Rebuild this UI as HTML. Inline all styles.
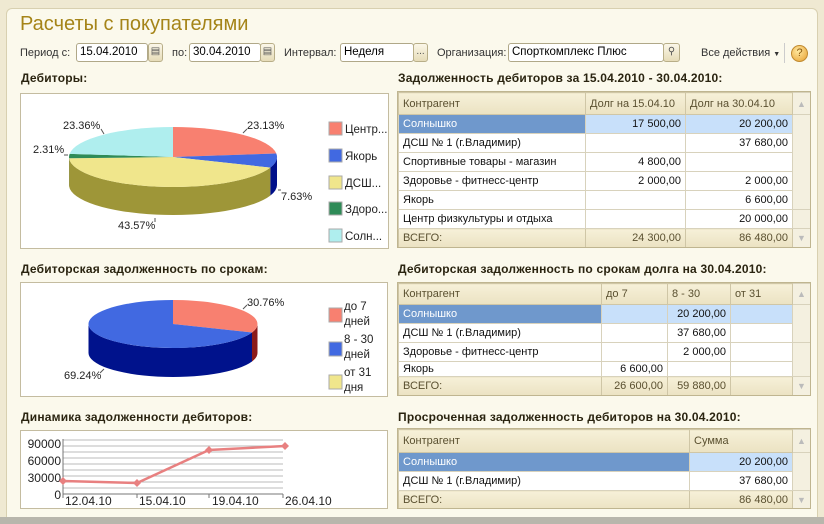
<!DOCTYPE html>
<html><head><meta charset="utf-8"><style>
*{box-sizing:border-box;margin:0;padding:0}
body{width:824px;height:524px;overflow:hidden;background:#efe9d2;font-family:"Liberation Sans","DejaVu Sans",sans-serif;font-size:11px;color:#222;position:relative}
.win{position:absolute;left:6px;top:8px;width:812px;height:510px;background:#fbf9ec;border:1px solid #d8d0b0;border-radius:6px 6px 0 0}
.bot{position:absolute;left:0;top:517px;width:824px;height:7px;background:#b8b6ac}
.a{position:absolute;white-space:nowrap}
.title{left:20px;top:13px;font-size:20px;color:#a58418}
.lbl{font-size:11px;color:#333;top:47px}
.inp{position:absolute;top:43px;height:19px;background:#fff;border:1px solid #b0a888;border-radius:3px;font-size:11.5px;padding:2px 3px;color:#000}
.btn{position:absolute;top:43px;height:19px;width:15px;border:1px solid #b8ae88;border-radius:3px;background:linear-gradient(#fbf7e8,#e6dcb8);font-size:10px;text-align:center;line-height:16px;color:#555}
.h{font-weight:bold;font-size:12px;color:#2a2410;letter-spacing:0.2px}
.box{position:absolute;background:#fff;border:1px solid #c4bca0}
table{position:absolute;border-collapse:collapse;font-size:11px;table-layout:fixed;background:#fff}
td{border:1px solid #d8d2bc;height:19px;padding:0 4px;white-space:nowrap;overflow:hidden;color:#111}
td.r{text-align:right}
tr.hd td,tr.tot td{background:linear-gradient(#f6f0d8,#ebe2c2);color:#5a5030;border-color:#cfc6a6}
tr.sel td{background:#c8e0fa}
tr.sel td.f{background:#6f98cc;color:#fff}
td.sb,tr.sel td.sb,tr.hd td.sb,tr.tot td.sb{background:#f4f0e0;border-color:#d8d2bc;text-align:center;color:#bbb;font-size:9px;padding:0}
tr.sh td{height:15px;line-height:13px;vertical-align:top;padding-top:1px}
.tw{position:absolute;border:1px solid #bfb590}
</style></head><body>
<div class="win"></div>
<div class="bot"></div>
<div class="a title">Расчеты с покупателями</div>
<div class="a lbl" style="left:20px">Период с:</div>
<div class="inp" style="left:76px;width:72px">15.04.2010</div>
<div class="btn" style="left:148px">▤</div>
<div class="a lbl" style="left:172px">по:</div>
<div class="inp" style="left:189px;width:72px">30.04.2010</div>
<div class="btn" style="left:260px">▤</div>
<div class="a lbl" style="left:284px">Интервал:</div>
<div class="inp" style="left:340px;width:74px">Неделя</div>
<div class="btn" style="left:413px">...</div>
<div class="a lbl" style="left:437px">Организация:</div>
<div class="inp" style="left:508px;width:156px">Спорткомплекс Плюс</div>
<div class="btn" style="left:663px;width:17px">&#9906;</div>
<div class="a lbl" style="left:701px;color:#333">Все действия <span style="font-size:7px">▼</span></div>
<div class="a" style="left:784px;top:43px;width:1px;height:20px;background:#ccc"></div>
<div class="a" style="left:791px;top:45px;width:17px;height:17px;border-radius:50%;background:radial-gradient(circle at 40% 35%,#ffe9a0,#e8a030);border:1px solid #c08a30;text-align:center;font-size:11px;line-height:15px;color:#8a5a10">?</div>

<div class="a h" style="left:21px;top:71px">Дебиторы:</div>
<div class="a h" style="left:398px;top:71px">Задолженность дебиторов за 15.04.2010 - 30.04.2010:</div>
<div class="a h" style="left:21px;top:262px">Дебиторская задолженность по срокам:</div>
<div class="a h" style="left:398px;top:262px">Дебиторская задолженность по срокам долга на 30.04.2010:</div>
<div class="a h" style="left:21px;top:410px">Динамика задолженности дебиторов:</div>
<div class="a h" style="left:398px;top:410px">Просроченная задолженность дебиторов на 30.04.2010:</div>

<div class="box" style="left:20px;top:93px;width:369px;height:156px"></div>
<div class="box" style="left:20px;top:282px;width:368px;height:115px"></div>
<div class="box" style="left:20px;top:430px;width:368px;height:79px"></div>

<svg class="a" style="left:0;top:0" width="824" height="524" font-family="Liberation Sans,sans-serif" font-size="11" fill="#222">
<path d="M277,157 A104,30 0 0 1 270.3,167.6 L270.3,195.6 A104,30 0 0 0 277,185 Z" fill="#00108a"/>
<path d="M270.3,167.6 A104,30 0 0 1 69.1,158.3 L69.1,186.3 A104,30 0 0 0 270.3,195.6 Z" fill="#9e9638"/>
<path d="M69.1,158.3 A104,30 0 0 1 69,157 L69,185 A104,30 0 0 0 69.1,186.3 Z" fill="#1b4a2c"/>
<path d="M173,157 L173,127 A104,30 0 0 1 276.3,153.5 Z" fill="#f88070"/>
<path d="M173,157 L276.3,153.5 A104,30 0 0 1 270.3,167.6 Z" fill="#4169e1"/>
<path d="M173,157 L270.3,167.6 A104,30 0 0 1 69.1,158.3 Z" fill="#f0e68c"/>
<path d="M173,157 L69.1,158.3 A104,30 0 0 1 69.6,153.9 Z" fill="#2e8b57"/>
<path d="M173,157 L69.6,153.9 A104,30 0 0 1 173,127 Z" fill="#afeeee"/>
<text x="247" y="129">23.13%</text><text x="63" y="129">23.36%</text>
<text x="33" y="153">2.31%</text><text x="281" y="200">7.63%</text><text x="118" y="229">43.57%</text>
<path d="M243,133 L247,129 M101,129 L104,134 M64,155 L68,155 M278,190 L281,190 M155,218 L155,222" stroke="#555" fill="none"/>
<g stroke="#aaa"><rect x="329" y="122" width="13" height="13" fill="#f88070"/><rect x="329" y="149" width="13" height="13" fill="#4169e1"/><rect x="329" y="176" width="13" height="13" fill="#f0e68c"/><rect x="329" y="202" width="13" height="13" fill="#2e8b57"/><rect x="329" y="229" width="13" height="13" fill="#afeeee"/></g>
<g font-size="11.5"><text x="345" y="133">Центр...</text><text x="345" y="160">Якорь</text><text x="345" y="187">ДСШ...</text><text x="345" y="213">Здоро...</text><text x="345" y="240">Солн...</text></g>
<path d="M257.5,324 A84.5,24 0 0 1 252,332.5 L252,361.5 A84.5,24 0 0 0 257.5,353 Z" fill="#8b1a1a"/>
<path d="M252,332.5 A84.5,24 0 0 1 88.5,324 L88.5,353 A84.5,24 0 0 0 252,361.5 Z" fill="#00128c"/>
<path d="M173,324 L173,300 A84.5,24 0 0 1 252,332.5 Z" fill="#f88070"/>
<path d="M173,324 L252,332.5 A84.5,24 0 1 1 173,300 Z" fill="#4169e1"/>
<text x="247" y="306">30.76%</text><text x="64" y="379">69.24%</text>
<path d="M243,309 L247,305 M100,373 L104,369" stroke="#555"/>
<g stroke="#aaa"><rect x="329" y="308" width="13" height="14" fill="#f88070"/><rect x="329" y="342" width="13" height="14" fill="#4169e1"/><rect x="329" y="375" width="13" height="14" fill="#f0e68c"/></g>
<g font-size="11.5"><text x="344" y="310">до 7</text><text x="344" y="325">дней</text><text x="344" y="343">8 - 30</text><text x="344" y="358">дней</text><text x="344" y="376">от 31</text><text x="344" y="391">дня</text></g>
<g stroke="#bbb" stroke-width="1">
<line x1="63" y1="440" x2="283" y2="440"/><line x1="63" y1="446" x2="283" y2="446"/><line x1="63" y1="452" x2="283" y2="452"/><line x1="63" y1="458" x2="283" y2="458"/><line x1="63" y1="464" x2="283" y2="464"/><line x1="63" y1="470" x2="283" y2="470"/><line x1="63" y1="476" x2="283" y2="476"/><line x1="63" y1="482" x2="283" y2="482"/><line x1="63" y1="488" x2="283" y2="488"/>
</g>
<path d="M63,439 L63,494 L283,494 M63,494 L63,498 M137,494 L137,498 M209,494 L209,498 M283,494 L283,498" stroke="#777" fill="none"/>
<g font-size="12" text-anchor="end"><text x="61" y="448">90000</text><text x="61" y="465">60000</text><text x="61" y="482">30000</text><text x="61" y="499">0</text></g>
<g font-size="12"><text x="65" y="505">12.04.10</text><text x="139" y="505">15.04.10</text><text x="212" y="505">19.04.10</text><text x="285" y="505">26.04.10</text></g>
<polyline points="63,481 137,483 209,450 285,446" stroke="#e88080" stroke-width="2.5" fill="none"/>
<g fill="#e88080"><path d="M63,477 l4,4 -4,4 -4,-4z"/><path d="M137,479 l4,4 -4,4 -4,-4z"/><path d="M209,446 l4,4 -4,4 -4,-4z"/><path d="M285,442 l4,4 -4,4 -4,-4z"/></g>
</svg>

<div class="tw" style="left:397px;top:91px;width:414px;height:157px;overflow:hidden">
<table style="left:0;top:0;width:412px">
<colgroup><col style="width:187px"><col style="width:100px"><col style="width:107px"><col style="width:18px"></colgroup>
<tr class="hd"><td style="height:22px">Контрагент</td><td>Долг на 15.04.10</td><td>Долг на 30.04.10</td><td class="sb">▲</td></tr>
<tr class="sel"><td class="f">Солнышко</td><td class="r">17 500,00</td><td class="r">20 200,00</td><td class="sb" rowspan="5"></td></tr>
<tr><td>ДСШ № 1 (г.Владимир)</td><td></td><td class="r">37 680,00</td></tr>
<tr><td>Спортивные товары - магазин</td><td class="r">4 800,00</td><td></td></tr>
<tr><td>Здоровье - фитнесс-центр</td><td class="r">2 000,00</td><td class="r">2 000,00</td></tr>
<tr><td>Якорь</td><td></td><td class="r">6 600,00</td></tr>
<tr><td>Центр физкультуры и отдыха</td><td></td><td class="r">20 000,00</td><td class="sb"></td></tr>
<tr class="tot"><td>ВСЕГО:</td><td class="r">24 300,00</td><td class="r">86 480,00</td><td class="sb">▼</td></tr>
</table></div>

<div class="tw" style="left:397px;top:282px;width:414px;height:114px;overflow:hidden">
<table style="left:0;top:0;width:412px">
<colgroup><col style="width:203px"><col style="width:66px"><col style="width:63px"><col style="width:62px"><col style="width:18px"></colgroup>
<tr class="hd"><td style="height:21px">Контрагент</td><td>до 7</td><td>8 - 30</td><td>от 31</td><td class="sb">▲</td></tr>
<tr class="sel"><td class="f">Солнышко</td><td></td><td class="r">20 200,00</td><td></td><td class="sb" rowspan="2"></td></tr>
<tr><td>ДСШ № 1 (г.Владимир)</td><td></td><td class="r">37 680,00</td><td></td></tr>
<tr><td>Здоровье - фитнесс-центр</td><td></td><td class="r">2 000,00</td><td></td><td class="sb" rowspan="2"></td></tr>
<tr class="sh"><td>Якорь</td><td class="r">6 600,00</td><td></td><td></td></tr>
<tr class="tot"><td>ВСЕГО:</td><td class="r">26 600,00</td><td class="r">59 880,00</td><td></td><td class="sb">▼</td></tr>
</table></div>

<div class="tw" style="left:397px;top:428px;width:414px;height:81px;overflow:hidden">
<table style="left:0;top:0;width:412px">
<colgroup><col style="width:291px"><col style="width:103px"><col style="width:18px"></colgroup>
<tr class="hd"><td style="height:23px">Контрагент</td><td>Сумма</td><td class="sb">▲</td></tr>
<tr class="sel"><td class="f">Солнышко</td><td class="r">20 200,00</td><td class="sb" rowspan="2"></td></tr>
<tr><td>ДСШ № 1 (г.Владимир)</td><td class="r">37 680,00</td></tr>
<tr class="tot"><td>ВСЕГО:</td><td class="r">86 480,00</td><td class="sb">▼</td></tr>
</table></div>
</body></html>
